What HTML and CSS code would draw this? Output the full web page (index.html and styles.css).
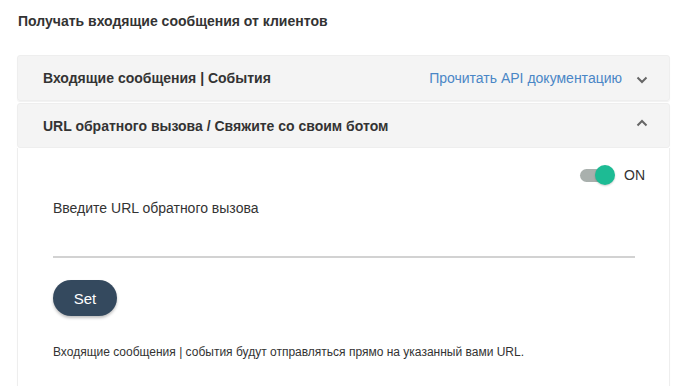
FILE: index.html
```html
<!DOCTYPE html>
<html>
<head>
  <title>Callback URL</title>
  <link rel="stylesheet" href="styles.css">
</head>
<body>
  <div class="page">
    <h1 class="page-title">Получать входящие сообщения от клиентов</h1>

    <div class="panel">
      <div class="panel-head">
        <span class="panel-title">Входящие сообщения | События</span>
        <a href="#" class="api-link">Прочитать API документацию</a>
        <svg class="chevron" width="12" height="8" viewBox="0 0 12 8">
          <path d="M1.5 1.5 L6 6 L10.5 1.5" fill="none" stroke="#666" stroke-width="2"/>
        </svg>
      </div>
    </div>

    <div class="panel open">
      <div class="panel-head">
        <span class="panel-title">URL обратного вызова / Свяжите со своим ботом</span>
        <svg class="chevron up" width="12" height="8" viewBox="0 0 12 8">
          <path d="M1.5 6.5 L6 2 L10.5 6.5" fill="none" stroke="#666" stroke-width="2"/>
        </svg>
      </div>

      <div class="panel-body">
        <div class="switch-row">
          <span class="switch"><span class="knob"></span></span>
          <span class="switch-label">ON</span>
        </div>

        <label class="field-label">Введите URL обратного вызова</label>
        <input class="field" type="text">

        <button class="btn-set">Set</button>

        <p class="note">Входящие сообщения | события будут отправляться прямо на указанный вами URL.</p>
      </div>
    </div>
  </div>
</body>
</html>
```

FILE: styles.css
```css
body {
  margin: 0;
  background: #fff;
  font-family: "Liberation Sans", Arial, sans-serif;
  color: #333;
}

.page {
  padding: 13px 17px 0 17px;
}

.page-title {
  margin: 0 0 26px 1px;
  font-size: 14px;
  font-weight: bold;
  line-height: 16px;
  color: #333;
}

/* Collapsible panels */
.panel {
  margin-bottom: 2px;
  margin-right: -1px;
  border-radius: 3px;
  box-shadow: 0 1px 1px rgba(0, 0, 0, 0.06);
}

.panel-head {
  display: flex;
  align-items: center;
  height: 46px;
  padding: 0 21px 0 25px;
  background: #f4f4f4;
  border: 1px solid #eee;
  border-radius: 3px;
  box-sizing: border-box;
}

.panel.open .panel-head {
  height: 45px;
}

.panel-title {
  flex: 1;
  font-size: 14px;
  font-weight: bold;
  color: #333;
}

.api-link {
  font-size: 14px;
  color: #4a86c6;
  text-decoration: none;
  margin-right: 14px;
  margin-top: -1px;
}

.chevron {
  display: block;
  margin-top: 4px;
}

.chevron.up {
  margin-top: -6px;
}

.panel-body {
  padding: 17px 34px 30px 35px;
  border-left: 1px solid #eee;
  border-right: 1px solid #eee;
  height: 240px;
  box-sizing: border-box;
}

/* Toggle */
.switch-row {
  display: flex;
  justify-content: flex-end;
  align-items: center;
  margin-right: -10px;
  height: 20px;
}

.switch {
  position: relative;
  width: 34px;
  height: 13px;
  border-radius: 7px;
  background: #a9b0ad;
}

.knob {
  position: absolute;
  right: -1px;
  top: -4px;
  width: 20px;
  height: 20px;
  border-radius: 50%;
  background: #1dbb94;
  box-shadow: 0 1px 2px rgba(0, 0, 0, 0.2);
}

.switch-label {
  margin-left: 10px;
  font-size: 14px;
  color: #333;
}

.field-label {
  display: block;
  margin-top: 15px;
  font-size: 14px;
  line-height: 16px;
  color: #333;
}

.field {
  display: block;
  width: 100%;
  height: 36px;
  margin-top: 4px;
  padding: 0;
  border: none;
  border-bottom: 2px solid #d2d2d2;
  outline: none;
  background: transparent;
}

.btn-set {
  display: block;
  margin-top: 22px;
  width: 64px;
  height: 36px;
  border: none;
  border-radius: 18px;
  background: #34495e;
  color: #fff;
  font-family: "Liberation Sans", Arial, sans-serif;
  font-size: 15px;
  box-shadow: 0 2px 3px rgba(0, 0, 0, 0.25);
}

.note {
  margin: 29px 0 0 0;
  font-size: 12px;
  line-height: 14px;
  color: #333;
}
```
